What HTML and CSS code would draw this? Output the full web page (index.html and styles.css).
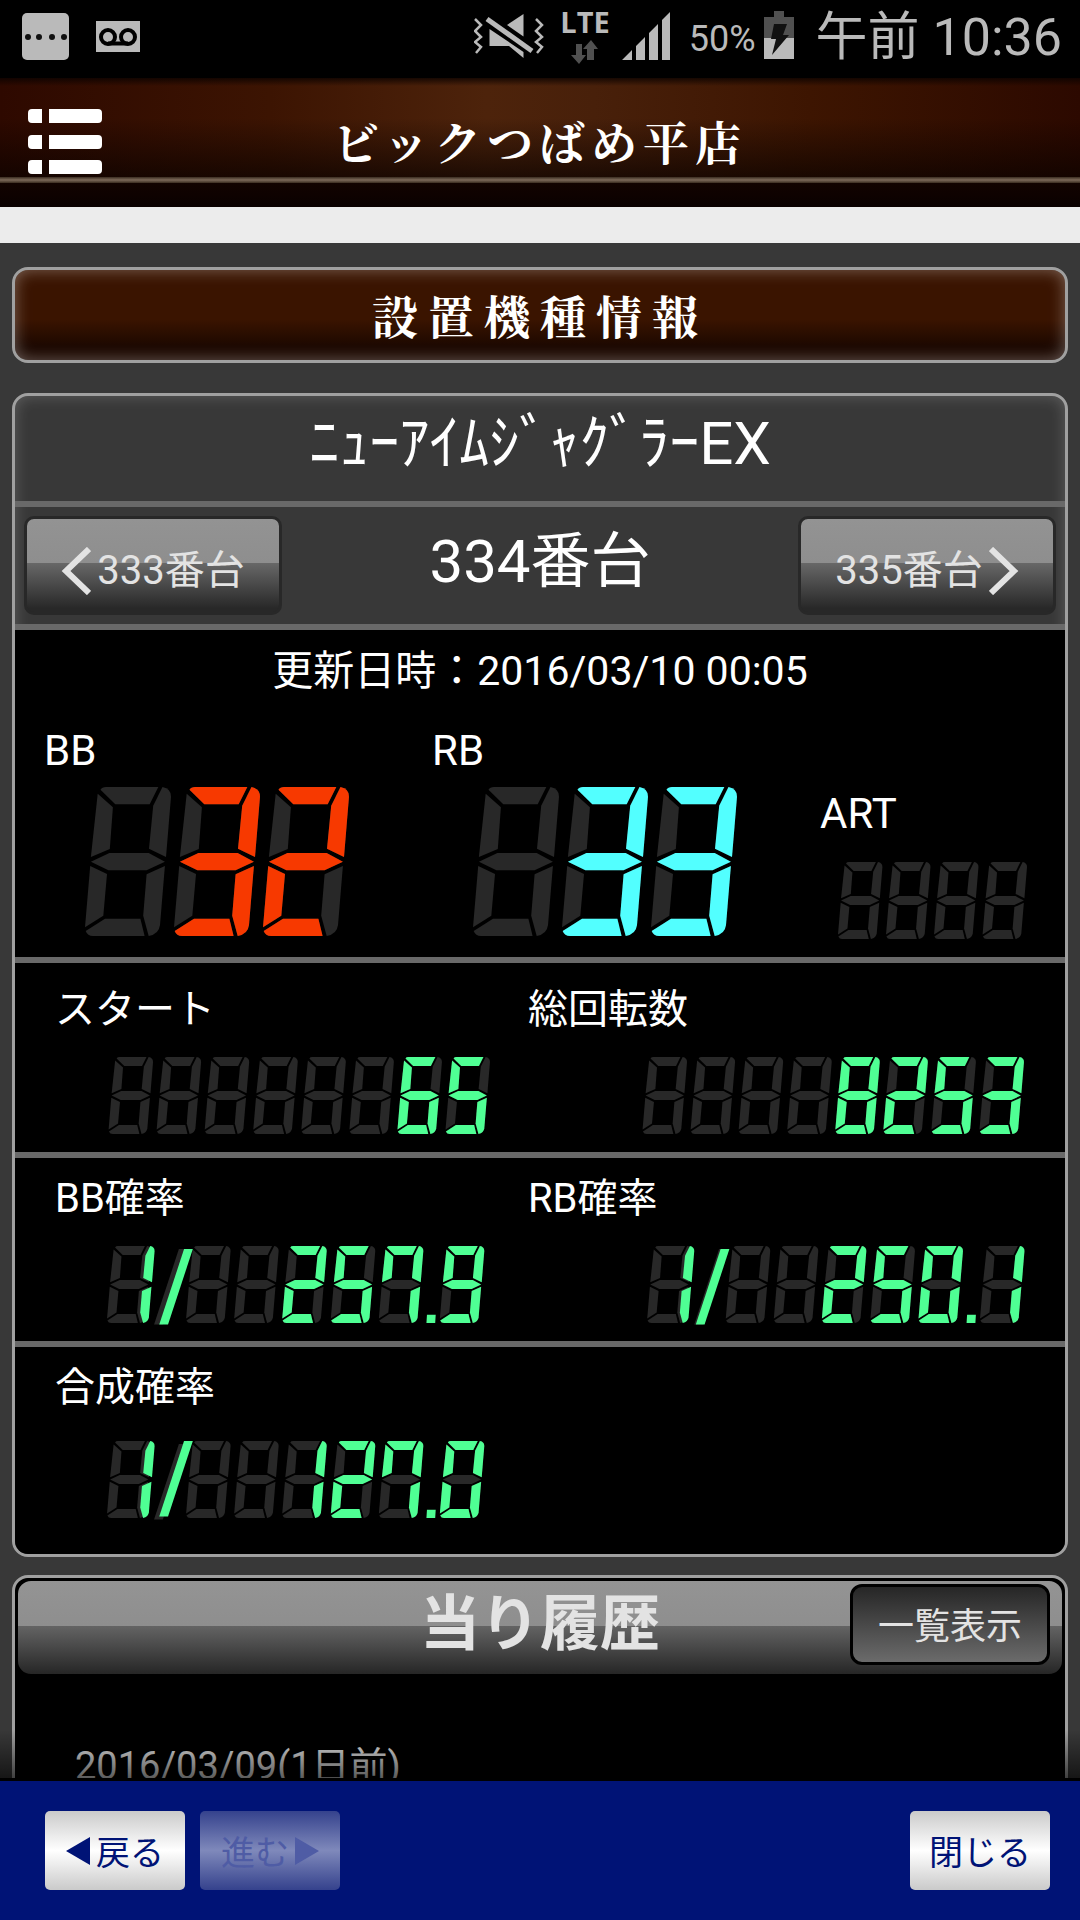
FILE: index.html
```html
<!DOCTYPE html>
<html lang="ja">
<head>
<meta charset="utf-8">
<meta name="viewport" content="width=device-width">
<title>ビックつばめ平店 設置機種情報</title>
<link rel="stylesheet" href="styles.css">
</head>
<body>
<svg class="sprite" aria-hidden="true">
  <defs>
    <path id="sa" d="M15.500 2.700Q17 0 21 0H73.300L64.700 17.300H30.300Z"/>
    <path id="sb" d="M77.500 0Q86 1.500 86 9.700L81 70L64 61.700L68.200 18.700Z"/>
    <path id="sc" d="M79.900 79L61.600 87.300L58.200 128.700L63.700 149Q74 147 75 138Z"/>
    <path id="sd" d="M20 131.700H55.400L59.600 149H8Q2.500 149 .7 144Z"/>
    <path id="se" d="M5.200 79L22 87L18.300 128.700L0 140.300Z"/>
    <path id="sf" d="M12.700 6.700L27.900 20.300L24.800 62L5.900 70Z"/>
    <path id="sg" d="M5.900 74.700L24.400 66H63.700L79.900 74.700L61.600 83.300H23.400Z"/>
    <g id="d0"><use href="#sa"/><use href="#sb"/><use href="#sc"/><use href="#sd"/><use href="#se"/><use href="#sf"/></g>
    <g id="d1"><use href="#sb"/><use href="#sc"/></g>
    <g id="d2"><use href="#sa"/><use href="#sb"/><use href="#sg"/><use href="#se"/><use href="#sd"/></g>
    <g id="d3"><use href="#sa"/><use href="#sb"/><use href="#sg"/><use href="#sc"/><use href="#sd"/></g>
    <g id="d5"><use href="#sa"/><use href="#sf"/><use href="#sg"/><use href="#sc"/><use href="#sd"/></g>
    <g id="d6"><use href="#d5"/><use href="#se"/></g>
    <g id="d7"><use href="#d1"/><use href="#sa"/><use href="#sf"/></g>
    <g id="d8"><use href="#d0"/><use href="#sg"/></g>
    <g id="d9"><use href="#d3"/><use href="#sf"/></g>
    <path id="slash" d="M0 146L48 0H65L17 146Z"/>
    <path id="dot" d="M1 133H18L17 149H0Z"/>
  </defs>
</svg>

<div class="screen">
  <div class="status">
    <svg class="ic-app" width="48" height="48" viewBox="0 0 48 48" aria-hidden="true"><rect width="47" height="47" rx="5" fill="#bababa"/><g fill="#111"><circle cx="6" cy="24" r="3"/><circle cx="17" cy="24" r="3"/><circle cx="30" cy="24" r="3"/><circle cx="42" cy="24" r="3"/></g></svg>
    <svg class="ic-voice" width="44" height="32" viewBox="0 0 44 32" aria-hidden="true"><rect width="44" height="31" fill="#bababa"/><g fill="none" stroke="#000" stroke-width="4"><circle cx="12" cy="16" r="7"/><circle cx="32" cy="16" r="7"/><path d="M12 22.500H32"/></g></svg>
    <div class="status-right">
      <svg class="ic-mute" width="70" height="46" viewBox="0 0 70 46" aria-hidden="true"><g fill="none" stroke="#bababa" stroke-width="2.500"><path d="M1 6L7 12L1 18L7 24L1 29L7 34L2 40"/><path d="M62 6L68 12L62 18L68 24L62 29L68 34L63 40"/></g><g fill="#bababa"><path d="M15.500 16L49.500 39V45L35 33H15.500Z"/><path d="M33 12L49.500 1V23.500Z"/></g><path d="M13 6L58 38" stroke="#bababa" stroke-width="5"/></svg>
      <div class="lte"><span>LTE</span><svg width="28" height="24" viewBox="0 0 28 24" fill="#505050" aria-hidden="true"><path d="M5 4H11V15H15L8 24L0 15H5Z"/><path d="M16 20H23V9H27L20 0L12 9H16Z"/></svg></div>
      <svg class="ic-signal" width="48" height="48" viewBox="0 0 48 48" fill="#bababa" aria-hidden="true"><path d="M0 48L10 38V48ZM14 48V34L23 25V48ZM27 48V21L36 12V48ZM40 48V8L48 0V48Z"/></svg>
      <span class="percent">50%</span>
      <svg class="ic-battery" width="30" height="48" viewBox="0 0 30 48" aria-hidden="true"><path d="M0 6H10V0H20V6H30V27H0Z" fill="#505050"/><path d="M0 27H30V48H0Z" fill="#bababa"/><path d="M10 13H23L19 24H25L8 44L12 28H7Z" fill="#111"/></svg>
      <time class="clock">午前 10:36</time>
    </div>
  </div>

  <header class="store">
    <button class="menu" type="button" aria-label="メニュー"><svg width="74" height="66" viewBox="0 0 74 66" fill="#fff" aria-hidden="true"><path d="M4 0H14V14H4Q0 14 0 10V4Q0 0 4 0ZM21 0H70Q74 0 74 4V10Q74 14 70 14H21Z"/><path d="M4 26H14V40H4Q0 40 0 36V30Q0 26 4 26ZM21 26H70Q74 26 74 30V36Q74 40 70 40H21Z"/><path d="M4 51H14V65H4Q0 65 0 61V55Q0 51 4 51ZM21 51H70Q74 51 74 55V61Q74 65 70 65H21Z"/></svg></button>
    <h1 class="store-name">ビックつばめ平店</h1>
  </header>
  <div class="strip"></div>

  <main class="content">
    <h2 class="heading">設置機種情報</h2>

    <section class="panel">
      <h3 class="machine">ﾆｭｰｱｲﾑｼﾞｬｸﾞﾗｰEX</h3>
      <nav class="units">
        <a class="unit-link" href="#333"><svg width="30" height="48" viewBox="0 0 30 48" aria-hidden="true"><path d="M28 2L5 24L28 46" fill="none" stroke="#e3e3e3" stroke-width="6"/></svg>333番台</a>
        <span class="unit-current">334番台</span>
        <a class="unit-link" href="#335">335番台<svg width="30" height="48" viewBox="0 0 30 48" aria-hidden="true"><path d="M2 2L25 24L2 46" fill="none" stroke="#e3e3e3" stroke-width="6"/></svg></a>
      </nav>

      <div class="bonus">
        <p class="updated">更新日時：2016/03/10 00:05</p>
        <div class="bonus-row">
          <div class="bonus-cell">
            <span class="label">BB</span>
            <svg class="led-big" width="266" height="149" viewBox="0 0 266 149" role="img" aria-label="32"><g class="off"><use href="#d8"/><use href="#d8" x="89"/><use href="#d8" x="178"/></g><g class="red"><use href="#d3" x="89"/><use href="#d2" x="178"/></g></svg>
          </div>
          <div class="bonus-cell">
            <span class="label">RB</span>
            <svg class="led-big" width="266" height="149" viewBox="0 0 266 149" role="img" aria-label="33"><g class="off"><use href="#d8"/><use href="#d8" x="89"/><use href="#d8" x="178"/></g><g class="cyan"><use href="#d3" x="89"/><use href="#d3" x="178"/></g></svg>
          </div>
          <div class="bonus-cell art">
            <span class="label">ART</span>
            <svg class="led-art" width="189" height="77" viewBox="0 0 366 149" role="img" aria-label="ART"><g class="off"><use href="#d8"/><use href="#d8" x="93"/><use href="#d8" x="186"/><use href="#d8" x="280"/></g></svg>
          </div>
        </div>
      </div>

      <div class="stats stats-count">
        <div class="stat">
          <span class="label">スタート</span>
          <svg class="led" width="384" height="77" viewBox="-5 0 743 149" role="img" aria-label="65"><g class="off"><use href="#d8"/><use href="#d8" x="93"/><use href="#d8" x="186"/><use href="#d8" x="280"/><use href="#d8" x="373"/><use href="#d8" x="466"/><use href="#d8" x="559"/><use href="#d8" x="652"/></g><g class="green"><use href="#d6" x="559"/><use href="#d5" x="652"/></g></svg>
        </div>
        <div class="stat">
          <span class="label">総回転数</span>
          <svg class="led" width="384" height="77" viewBox="-3 0 743 149" role="img" aria-label="8253"><g class="off"><use href="#d8"/><use href="#d8" x="93"/><use href="#d8" x="186"/><use href="#d8" x="280"/><use href="#d8" x="373"/><use href="#d8" x="466"/><use href="#d8" x="559"/><use href="#d8" x="652"/></g><g class="green"><use href="#d8" x="373"/><use href="#d2" x="466"/><use href="#d5" x="559"/><use href="#d3" x="652"/></g></svg>
        </div>
      </div>

      <div class="stats stats-rate">
        <div class="stat">
          <span class="label">BB確率</span>
          <svg class="led" width="384" height="77" viewBox="0 0 743 149" role="img" aria-label="1/257.9"><g class="off"><use href="#d8" x="2"/><use href="#slash" x="93" y="6"/><use href="#d8" x="155"/><use href="#d8" x="248"/><use href="#d8" x="341"/><use href="#d8" x="435"/><use href="#d8" x="528"/><use href="#d8" x="646"/></g><g class="green"><use href="#d1" x="8"/><use href="#slash" x="103" y="6"/><use href="#d2" x="341"/><use href="#d5" x="435"/><use href="#d7" x="528"/><use href="#dot" x="620"/><use href="#d9" x="646"/></g></svg>
        </div>
        <div class="stat">
          <span class="label">RB確率</span>
          <svg class="led" width="384" height="77" viewBox="0 0 743 149" role="img" aria-label="1/250.1"><g class="off"><use href="#d8" x="12"/><use href="#slash" x="103" y="6"/><use href="#d8" x="164"/><use href="#d8" x="257"/><use href="#d8" x="350"/><use href="#d8" x="444"/><use href="#d8" x="537"/><use href="#d8" x="656"/></g><g class="green"><use href="#d1" x="17"/><use href="#slash" x="106" y="6"/><use href="#d2" x="350"/><use href="#d5" x="444"/><use href="#d0" x="537"/><use href="#dot" x="630"/><use href="#d1" x="656"/></g></svg>
        </div>
      </div>

      <div class="stats stats-total">
        <div class="stat">
          <span class="label">合成確率</span>
          <svg class="led" width="384" height="77" viewBox="0 0 743 149" role="img" aria-label="1/127.0"><g class="off"><use href="#d8" x="2"/><use href="#slash" x="93" y="6"/><use href="#d8" x="155"/><use href="#d8" x="248"/><use href="#d8" x="341"/><use href="#d8" x="435"/><use href="#d8" x="528"/><use href="#d8" x="646"/></g><g class="green"><use href="#d1" x="8"/><use href="#slash" x="103"/><use href="#d1" x="341"/><use href="#d2" x="435"/><use href="#d7" x="528"/><use href="#dot" x="620"/><use href="#d0" x="646"/></g></svg>
        </div>
      </div>
    </section>

    <section class="panel history">
      <div class="history-head">
        <h3>当り履歴</h3>
        <button class="list-button" type="button">一覧表示</button>
      </div>
      <p class="history-date">2016/03/09(1日前)</p>
    </section>
  </main>

  <footer class="toolbar">
    <button type="button"><svg width="24" height="28" viewBox="0 0 24 28" fill="currentColor" aria-hidden="true"><path d="M24 0V28L0 14Z"/></svg>戻る</button>
    <button type="button" disabled>進む<svg width="24" height="28" viewBox="0 0 24 28" fill="currentColor" aria-hidden="true"><path d="M0 0V28L24 14Z"/></svg></button>
    <button class="close" type="button">閉じる</button>
  </footer>
</div>
</body>
</html>
```
FILE: styles.css
```css
* { box-sizing: border-box; }

body {
  margin: 0;
  background: #383838;
  color: #fff;
  font-family: Roboto, "Noto Sans CJK JP", sans-serif;
}

h1, h2, h3, p { margin: 0; font-weight: 400; }
button { font: inherit; border: 0; padding: 0; cursor: pointer; }
svg { display: block; flex: none; }
.sprite { position: absolute; width: 0; height: 0; }

.screen {
  display: flex;
  flex-direction: column;
  height: 100vh;
  overflow: hidden;
}

/* Status bar */
.status {
  display: flex;
  align-items: flex-start;
  flex: none;
  height: 78px;
  padding: 0 18px 0 22px;
  background: #000;
  color: #bababa;
}
.ic-app { margin: 13px 26px 0 0; }
.ic-voice { margin-top: 21px; }
.status-right { display: flex; align-items: flex-start; margin-left: auto; }
.ic-mute { margin: 13px 16px 0 0; }
.lte {
  display: flex;
  flex-direction: column;
  align-items: center;
  gap: 4px;
  margin: 8px 12px 0 0;
  font: 700 29px/28px "Open Sans", sans-serif;
}
.ic-signal { margin: 12px 19px 0 0; }
.percent { margin-right: 8px; font-size: 36px; line-height: 78px; }
.ic-battery { margin: 11px 22px 0 0; }
.clock { font-size: 52px; line-height: 76px; }

/* Store header */
.store {
  display: grid;
  grid-template-columns: 1fr auto 1fr;
  flex: none;
  height: 129px;
  padding: 0 28px;
  background:
    linear-gradient(transparent 99px, #3a2c20 99px, #7d6a5a 102px, #3a2c20 105px, #120300 105px, #0a0100 129px),
    linear-gradient(rgba(10, 2, 0, .8), transparent 8px, transparent 40px, rgba(10, 2, 0, .7) 99px),
    linear-gradient(90deg, #2e0900, #3c1402 25%, #4d230b 45%, #48200a 55%, #3d1501 75%, #2c0900);
}
.menu { justify-self: start; align-self: start; margin-top: 31px; background: none; }
.store-name {
  padding-top: 32px;
  font: 700 46px/60px "Noto Serif CJK JP", "Noto Sans CJK JP", serif;
  letter-spacing: 6px;
}
.strip { flex: none; height: 36px; background: #ececec; }

/* Scrolled content, fading out above the toolbar */
.content {
  position: relative;
  flex: 1;
  min-height: 0;
  overflow: hidden;
  padding: 24px 12px 0;
}
.content::after {
  content: "";
  position: absolute;
  inset: auto 0 0;
  height: 48px;
  background: linear-gradient(transparent, rgba(0, 0, 0, .6));
}

.heading {
  height: 96px;
  margin-bottom: 30px;
  border: 3px solid #a0a0a0;
  border-radius: 16px;
  background: linear-gradient(#3a1400 55%, #1c0800 85%);
  box-shadow: inset 0 0 16px rgba(255, 255, 255, .35);
  font: 700 46px/88px "Noto Serif CJK JP", "Noto Sans CJK JP", serif;
  letter-spacing: 10px;
  text-align: center;
}

.panel {
  margin-bottom: 18px;
  overflow: hidden;
  border: 3px solid #a0a0a0;
  border-radius: 16px;
  background: #383838;
  box-shadow: inset 0 0 15px rgba(255, 255, 255, .2);
}
.machine {
  height: 111px;
  border-bottom: 6px solid #696969;
  font-size: 60px;
  line-height: 96px;
  text-align: center;
}
.units {
  display: grid;
  grid-template-columns: 258px 1fr 258px;
  height: 123px;
  padding: 9px 9px 0;
  border-bottom: 6px solid #696969;
}
.unit-link {
  display: flex;
  align-items: center;
  justify-content: center;
  gap: 6px;
  height: 99px;
  padding-top: 10px;
  border: 3px solid #282828;
  border-radius: 10px;
  background: linear-gradient(#939393, #8e8e8e 47%, #686868 47%, #282828 96%);
  color: #e3e3e3;
  font-size: 40px;
  line-height: 60px;
  text-decoration: none;
}
.unit-current { font-size: 60px; line-height: 92px; text-align: center; }

/* LED counters */
.off { fill: #282828; }
.red { fill: #f73900; }
.cyan { fill: #52ffff; }
.green { fill: #4fff94; }
.label { display: block; font-size: 40px; line-height: 62px; }

.bonus {
  height: 333px;
  padding: 10px 0 0 29px;
  border-bottom: 6px solid #696969;
  background: #000;
}
.updated { margin-left: -29px; font-size: 41px; line-height: 62px; text-align: center; }
.bonus-row { display: grid; grid-template-columns: 388px 388px 1fr; padding-top: 18px; }
.bonus-cell .label { font-size: 42px; }
.bonus-cell.art { padding-top: 63px; }
.led-big { margin: 5px 0 0 41px; }
.led-art { margin: 17px 0 0 18px; }

.stats {
  display: grid;
  grid-template-columns: 7fr 8fr;
  column-gap: 38px;
  padding: 10px 40px 18px;
  border-bottom: 6px solid #696969;
  background: #000;
}
.stats-count { padding-top: 16px; }
.stats-total { padding-bottom: 36px; border-bottom: 0; }
.led { margin: 16px 0 0 auto; overflow: visible; }
.stats-total .led { margin-top: 22px; }

/* Hit history */
.history { min-height: 260px; background: #000; box-shadow: none; }
.history-head {
  display: grid;
  grid-template-columns: 1fr auto 1fr;
  height: 99px;
  padding: 3px 12px 0;
  border: 3px solid #000;
  border-radius: 16px;
  background: linear-gradient(#949494, #8e8e8e 48%, #646464 48%, #262626);
}
.history-head h3 {
  grid-column: 2;
  color: #e3e3e3;
  font-size: 60px;
  font-weight: 700;
  line-height: 82px;
}
.list-button {
  justify-self: end;
  width: 200px;
  height: 81px;
  padding-bottom: 4px;
  border: 3px solid #000;
  border-radius: 12px;
  background: linear-gradient(#262626, #6b6b6b);
  color: #e3e3e3;
  font-size: 36px;
}
.history-date {
  padding: 58px 0 0 60px;
  color: #e6e6e6;
  font-size: 38px;
  line-height: 62px;
}

/* Browser toolbar */
.toolbar {
  display: flex;
  gap: 15px;
  flex: none;
  height: 142px;
  padding: 30px 30px 0 45px;
  border-top: 3px solid #000;
  background: #001376;
}
.toolbar button {
  display: flex;
  align-items: center;
  justify-content: center;
  gap: 6px;
  width: 140px;
  height: 79px;
  border-radius: 5px;
  background: linear-gradient(#cacaca, #fff 50%, #cacaca);
  color: #001376;
  font-size: 34px;
}
.toolbar button:disabled { background: linear-gradient(#35428d, #7f89bb 50%, #35428d); color: #4f5ca5; }
.toolbar .close { margin-left: auto; }
```
